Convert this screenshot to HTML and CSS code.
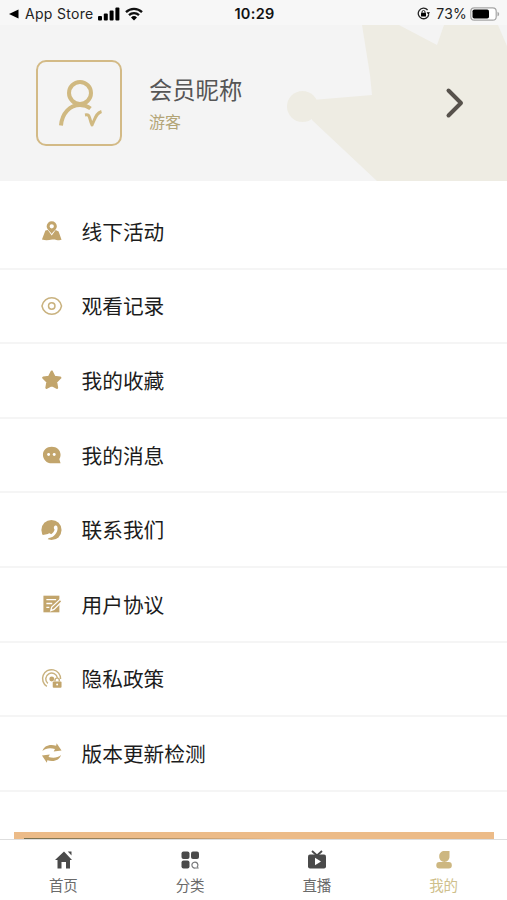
FILE: index.html
```html
<!DOCTYPE html>
<html lang="zh-CN">
<head>
    <meta charset="UTF-8">
    <meta name="viewport" content="width=device-width, initial-scale=1.0">
    <title>我的</title>
    <link rel="stylesheet" href="styles.css">
</head>
<body>

<!-- Status Bar -->
<div class="status-bar">
    <div class="status-left">
        <svg width="10" height="10" viewBox="0 0 10 10"><path d="M0 5 9.500 .5v9z"/></svg>
        <span class="back-app">App Store</span>
        <svg class="signal" width="22" height="14" viewBox="0 0 22 14">
            <rect x="0" y="9" width="4" height="4.500" rx="1"/>
            <rect x="5.800" y="6.500" width="4" height="7" rx="1"/>
            <rect x="11.600" y="3.500" width="4" height="10" rx="1"/>
            <rect x="17.400" y="0.500" width="4" height="13" rx="1"/>
        </svg>
        <svg class="wifi" width="18" height="14" viewBox="0 0 18 14">
            <path d="M1 5.200a11.500 11.500 0 0 1 16 0M4 8.200a7.200 7.200 0 0 1 10 0" fill="none" stroke="#111" stroke-width="2.300"/>
            <path d="M9 13.500 6 10.500a4.300 4.300 0 0 1 6 0z"/>
        </svg>
    </div>
    <div class="status-time">10:29</div>
    <div class="status-right">
        <svg width="13" height="13" viewBox="0 0 13 13">
            <path d="M10.600 3A5.300 5.300 0 1 0 11.800 7.300" fill="none" stroke="#222" stroke-width="1.300"/>
            <path d="M9.600 5.200h3.400l-1.600 2.600z"/>
            <rect x="4" y="5.800" width="5" height="3.700" rx=".6"/>
            <path d="M5 6V5a1.500 1.500 0 0 1 3 0v1" fill="none" stroke="#222"/>
        </svg>
        <span class="percent">73%</span>
        <svg class="battery" width="30" height="14" viewBox="0 0 30 14">
            <rect x=".8" y=".8" width="25.400" height="12.400" rx="3.500" fill="#fff" stroke="#a5a5a5" stroke-width="1.200"/>
            <rect x="2.500" y="2.500" width="16.500" height="9" rx="1.800"/>
            <path d="M27.500 4.700c2.200.8 2.200 3.800 0 4.600z" fill="#a5a5a5"/>
        </svg>
    </div>
</div>

<!-- Profile -->
<header class="profile">
    <svg class="crown" width="222" height="156" viewBox="0 0 222 156">
        <path d="M77 0h37l38 20 7-20h54l9 21v135H92L27 95V75l60-5-2-20z"/>
        <circle cx="17.500" cy="81.500" r="15.500"/>
    </svg>
    <div class="avatar">
        <svg width="86" height="86" viewBox="0 0 86 86" fill="none" stroke="#d0b981">
            <circle cx="44" cy="33" r="11" stroke-width="4"/>
            <path d="M25 65.500C26 53 34 45 44 45c4 0 7 .8 10.500 3.500" stroke-width="4"/>
            <path d="M49 55c5.500-1 3.500 2 7 10C59 59 60 53 65.500 51.500" stroke-width="3" stroke-linejoin="round"/>
        </svg>
    </div>
    <div class="profile-text">
        <div class="nickname">会员昵称</div>
        <div class="role">游客</div>
    </div>
    <svg class="arrow" width="20" height="32" viewBox="0 0 20 32">
        <path d="M3.500 3.500 16 16 3.500 28.500"/>
    </svg>
</header>

<!-- Menu -->
<main class="content">
    <ul class="menu">
        <li>
            <svg class="icon" viewBox="0 0 24 24">
                <path d="M5.500 11.500 8 11l4 5.500L16 11l3 1.500 3 8.500c-3.500 1.300-6-.8-9.500-.3S6.500 22 2 20.700z"/>
                <path fill-rule="evenodd" d="M12 2a5.200 5.200 0 0 1 5.200 5.200c0 3-3 4.800-5.200 7.800-2.200-3-5.200-4.800-5.200-7.800A5.200 5.200 0 0 1 12 2zm0 3a2.200 2.200 0 1 0 0 4.400A2.200 2.200 0 0 0 12 5z"/>
            </svg>
            <span>线下活动</span>
        </li>
        <li>
            <svg class="icon line" viewBox="0 0 24 24">
                <path d="M2 12C3 6.500 7.500 3.500 12 3.500S21 6.500 22 12c-1 5.500-5.500 8.500-10 8.500S3 17.500 2 12z"/>
                <circle cx="12" cy="12" r="3.300"/>
            </svg>
            <span>观看记录</span>
        </li>
        <li>
            <svg class="icon" viewBox="0 0 24 24">
                <path d="m12 3.500 2.600 5.300 6 .9-4.300 4.200 1 6L12 17.100l-5.300 2.800 1-6L3.400 9.700l6-.9z" stroke="#c2a56c" stroke-width="2.500" stroke-linejoin="round"/>
            </svg>
            <span>我的收藏</span>
        </li>
        <li>
            <svg class="icon" viewBox="0 0 24 24">
                <path d="M12 3.500c5.200 0 9 3.600 9 8.200 0 1.800-.6 3.400-1.300 4.500l1.300 4.300h-9c-5.200 0-9-4-9-8.800s3.800-8.200 9-8.200z"/>
                <circle cx="8.800" cy="11.500" r="1.500" fill="#fff"/>
                <circle cx="14.500" cy="11.500" r="1.500" fill="#fff"/>
            </svg>
            <span>我的消息</span>
        </li>
        <li>
            <svg class="icon" viewBox="0 0 24 24">
                <circle cx="11.700" cy="12" r="10.300"/>
                <path d="M15.500 7.500c1.800-.8 3 1.600 2.300 4.500-1.300 5.200-6 8.600-9.700 8-1.500-.3-1.200-2-.6-3l1.200-1.500c.8-.5 1.500 0 2.700.8 1.700-1 3-2.600 3.500-4.500-1.200-1.500-1-3.500.6-4.300z" fill="#fff"/>
                <path d="M3 17 8 16l2 2.500-3 4.500H3z" fill="#fff"/>
            </svg>
            <span>联系我们</span>
        </li>
        <li>
            <svg class="icon" viewBox="0 0 24 24">
                <path d="M3.500 3.500h16.300v17H3.500z"/>
                <path d="M6.500 7.500h10M6.500 11.500h6M6.500 15.500h3" fill="none" stroke="#fff" stroke-width="1.400"/>
                <path d="m11 18.800 1-3.600 8.500-8 2 2.300-8.200 8z" stroke="#fff" stroke-width="1.300"/>
            </svg>
            <span>用户协议</span>
        </li>
        <li>
            <svg class="icon line" viewBox="0 0 24 24">
                <path d="M7 19.500A9.200 9.200 0 1 1 21 12M8 16.500A6 6 0 1 1 17.800 11"/>
                <circle class="solid" cx="12" cy="12" r="2.500"/>
                <rect class="solid" x="13" y="14.500" width="9" height="6.500" rx="1"/>
                <path d="M15.300 14.500v-1.200a2.200 2.200 0 0 1 4.400 0v1.200"/>
                <circle cx="17.500" cy="17.700" r="1" fill="#fff" stroke="none"/>
            </svg>
            <span>隐私政策</span>
        </li>
        <li>
            <svg class="icon" viewBox="0 0 24 24">
                <path d="M2.500 10C4 5 9 2.700 16.500 4.500l.5-2.500 5 7.500-8 1 1.300-2.500C10.500 6.500 6 7 2.500 10z"/>
                <path d="M21.500 14c-1.500 5-6.500 7.300-14 5.500L7 22l-5-7.500 8-1-1.300 2.500c4.800 1.500 9.300 1 12.800-2z"/>
            </svg>
            <span>版本更新检测</span>
        </li>
    </ul>
    <div class="banner"><div class="banner-image"></div></div>
</main>

<!-- Tab Bar -->
<nav class="tab-bar">
    <a class="tab">
        <svg viewBox="0 0 20 20">
            <path d="M11 1.500 2 10h2.500v8.500h4V12H13v6.500h4V10h2z"/>
            <path d="M14.800 1.500h3.700V5.500z"/>
        </svg>
        <span>首页</span>
    </a>
    <a class="tab">
        <svg viewBox="0 0 20 20">
            <rect x="1.500" y="1.500" width="8" height="7.500" rx="2"/>
            <rect x="11" y="1.500" width="8" height="7.500" rx="2"/>
            <rect x="1.500" y="10.500" width="8" height="8" rx="2"/>
            <path d="M17 17.200a3 3 0 1 0-1.500.8h3.200" fill="none" stroke="#77787a" stroke-width="1.200"/>
        </svg>
        <span>分类</span>
    </a>
    <a class="tab">
        <svg viewBox="0 0 20 20">
            <path d="M5 1 10 5.500 15 1" fill="none" stroke="#4a4a4a" stroke-width="1.900"/>
            <rect x="1" y="4.500" width="18" height="14" rx="2"/>
            <path d="m8 7.700 6 3.800-6 3.800z" fill="#fff"/>
        </svg>
        <span>直播</span>
    </a>
    <a class="tab active">
        <svg viewBox="0 0 20 20">
            <path d="M15.500 1v5.200a5.200 5.200 0 1 1-10.300 0C5.200 3 7.500 1 10.500 1z"/>
            <rect x="2.300" y="12" width="15.500" height="6.500" rx="3"/>
        </svg>
        <span>我的</span>
    </a>
</nav>

</body>
</html>
```
FILE: styles.css
```css
* {
    box-sizing: border-box;
}
body {
    margin: 0;
    height: 900px;
    display: flex;
    flex-direction: column;
    overflow: hidden;
    background-color: #fff;
    color: #1c1c1c;
    font-family: "Noto Sans CJK SC", sans-serif;
}
svg {
    display: block;
    flex-shrink: 0;
}

/* status bar */
.status-bar {
    height: 25px;
    flex-shrink: 0;
    padding: 2px 7px 0 9px;
    display: grid;
    grid-template-columns: 1fr auto 1fr;
    align-items: center;
    background-color: #f7f7f7;
    font-family: Inter, "Liberation Sans", sans-serif;
    font-size: 14px;
    color: #222;
}
.status-left, .status-right {
    display: flex;
    align-items: center;
}
.status-right {
    justify-content: flex-end;
}
.back-app {
    margin-left: 6px;
    letter-spacing: 0.3px;
}
.signal {
    margin-left: 5px;
}
.wifi {
    margin-left: 5px;
}
.status-time {
    font-weight: 600;
    font-size: 14.500px;
    letter-spacing: 0.3px;
    color: #111;
}
.percent {
    margin: 0 3px 0 6px;
    letter-spacing: 0.2px;
}

/* profile */
.profile {
    position: relative;
    height: 156px;
    flex-shrink: 0;
    padding: 0 42px 0 36px;
    display: flex;
    align-items: center;
    background-color: #f4f4f4;
}
.crown {
    position: absolute;
    top: 0;
    right: 0;
    fill: #eeece3;
}
.avatar {
    width: 86px;
    height: 86px;
    border: 2px solid #d3ba86;
    border-radius: 10px;
    display: flex;
    align-items: center;
    justify-content: center;
}
.profile-text {
    flex: 1;
    margin: -2px 0 0 27px;
}
.nickname {
    font-size: 23.300px;
    line-height: 34px;
    color: #565656;
}
.role {
    margin-top: 3px;
    font-size: 16px;
    line-height: 24px;
    color: #b3a577;
}
.arrow {
    position: relative;
    fill: none;
    stroke: #57524c;
    stroke-width: 4;
    stroke-linecap: round;
    stroke-linejoin: round;
}

/* menu */
.content {
    flex: 1;
    min-height: 0;
    padding-top: 14px;
    overflow: hidden;
}
.menu {
    margin: 0;
    padding: 0;
    list-style: none;
}
.menu li {
    height: 74.600px;
    padding: 0 0 1px 40px;
    display: flex;
    align-items: center;
    gap: 18px;
    border-bottom: 2px solid #f5f5f5;
    font-size: 20.700px;
}
.icon {
    width: 23.500px;
    height: 24px;
    margin-top: 1px;
    fill: #c2a56c;
}
.icon.line {
    fill: none;
    stroke: #c9b27f;
    stroke-width: 1.500;
}
.icon .solid {
    fill: #c2a56c;
    stroke: none;
}
.banner {
    height: 160px;
    margin: 40px 13px 0 14px;
    padding: 6px 10px;
    background-color: #ecbb88;
}
.banner-image {
    height: 148px;
    background: linear-gradient(90deg, #77704f 0, #a88a60 25%, #ecbb88 55%);
}

/* tab bar */
.tab-bar {
    height: 61px;
    flex-shrink: 0;
    display: grid;
    grid-template-columns: repeat(4, 1fr);
    border-top: 1px solid #dedede;
    background-color: #fff;
}
.tab {
    padding-top: 10px;
    display: flex;
    flex-direction: column;
    align-items: center;
    font-size: 14.500px;
    line-height: 20px;
    color: #6a6a6a;
}
.tab svg {
    width: 20px;
    height: 20px;
    margin-bottom: 5px;
    fill: #4a4a4a;
}
.tab.active {
    color: #cfbf8c;
}
.tab.active svg {
    fill: #cdb781;
}
```
